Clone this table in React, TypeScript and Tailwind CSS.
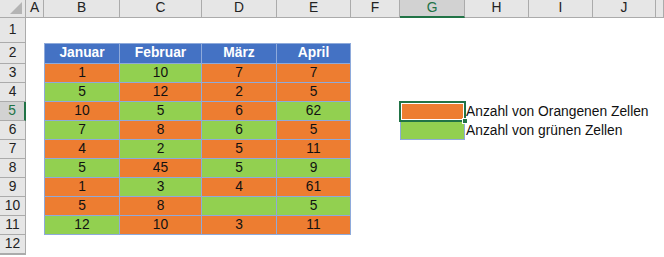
import React from "react";

type Fill = "o" | "g";
type Cell = [string, Fill];

const COLS = ["A", "B", "C", "D", "E", "F", "G", "H", "I", "J", ""];

const HEADERS = ["Januar", "Februar", "März", "April"];

// rows 3..11, columns B..E
const DATA: Cell[][] = [
  [["1", "o"], ["10", "g"], ["7", "o"], ["7", "o"]],
  [["5", "g"], ["12", "o"], ["2", "o"], ["5", "o"]],
  [["10", "o"], ["5", "g"], ["6", "o"], ["62", "g"]],
  [["7", "g"], ["8", "o"], ["6", "g"], ["5", "o"]],
  [["4", "o"], ["2", "g"], ["5", "o"], ["11", "o"]],
  [["5", "g"], ["45", "o"], ["5", "g"], ["9", "g"]],
  [["1", "o"], ["3", "g"], ["4", "o"], ["61", "o"]],
  [["5", "o"], ["8", "o"], ["", "g"], ["5", "g"]],
  [["12", "g"], ["10", "o"], ["3", "o"], ["11", "o"]],
];

const fillClass = (f: Fill) => (f === "o" ? "bg-[#ed7d31]" : "bg-[#92d050]");

function Corner() {
  return (
    <div className="relative border-r border-b border-[#ababab] bg-[#e6e6e6]">
      <svg className="absolute right-[3px] bottom-[3px]" width="12" height="12" viewBox="0 0 12 12">
        <polygon points="12,0 12,12 0,12" fill="#b4b4b4" />
      </svg>
    </div>
  );
}

function ColHeader({ label }: { label: string }) {
  const active = label === "G";
  return (
    <div
      className={
        active
          ? "flex items-center justify-center border-r border-[#ababab] border-b-2 border-b-[#217346] bg-[#d2d2d2] text-[#217346]"
          : "flex items-center justify-center border-r border-b border-[#ababab] bg-[#e6e6e6] text-[#222]"
      }
    >
      {label}
    </div>
  );
}

function RowHeader({ n }: { n: number }) {
  const active = n === 5;
  return (
    <div
      className={
        active
          ? "flex items-center justify-center border-b border-[#ababab] border-r-2 border-r-[#217346] bg-[#d2d2d2] text-[#217346]"
          : "flex items-center justify-center border-r border-b border-[#ababab] bg-[#e6e6e6] text-[#222]"
      }
    >
      {n <= 12 ? n : ""}
    </div>
  );
}

function SheetCell({ row, col }: { row: number; col: number }) {
  const tableCol = col >= 1 && col <= 4;
  const edge = `${col === 1 ? "border-l" : ""} ${row === 2 ? "border-t" : ""}`;

  if (tableCol && row === 2) {
    return (
      <div
        className={`flex items-center justify-center border-r border-b border-[#8eaadb] bg-[#4472c4] font-bold text-white ${edge}`}
      >
        {HEADERS[col - 1]}
      </div>
    );
  }

  if (tableCol && row >= 3 && row <= 11) {
    const [value, fill] = DATA[row - 3][col - 1];
    return (
      <div
        className={`flex items-center justify-center border-r border-b border-[#8eaadb] pt-px text-[#111] ${fillClass(fill)} ${edge}`}
      >
        {value}
      </div>
    );
  }

  // legend swatches in G5 / G6
  if (col === 6 && row === 5) {
    return (
      <div className="relative bg-[#ed7d31]">
        <div className="absolute -top-px -left-px -right-px -bottom-px border-2 border-[#217346]">
          <div className="h-full w-full border border-white" />
        </div>
        <div className="absolute -right-[3px] -bottom-[3px] h-[6px] w-[6px] border border-white bg-[#217346]" />
      </div>
    );
  }
  if (col === 6 && row === 6) {
    return <div className="border border-t-0 border-[#8eaadb] bg-[#92d050]" />;
  }

  // legend labels overflow from H into I and J
  if (col === 7 && (row === 5 || row === 6)) {
    return (
      <div className="relative z-10 flex items-center overflow-visible whitespace-nowrap pl-[1px] pt-px text-[#111]">
        {row === 5 ? "Anzahl von Orangenen Zellen" : "Anzahl von grünen Zellen"}
      </div>
    );
  }

  return <div />;
}

export default function App() {
  const rows = Array.from({ length: 13 }, (_, i) => i + 1);
  return (
    <div className="h-[257px] w-[664px] overflow-hidden bg-white font-['Liberation_Sans',Arial,sans-serif] text-[13.8px]">
      <div className="grid grid-cols-[26px_18px_76px_82px_75px_74px_49px_65px_64px_64px_63px_1fr] grid-rows-[18px_25px_21px_repeat(10,19px)]">
        <Corner />
        {COLS.map((c, i) => (
          <ColHeader key={i} label={c} />
        ))}
        {rows.map((r) => (
          <React.Fragment key={r}>
            <RowHeader n={r} />
            {COLS.map((_, c) => (
              <SheetCell key={c} row={r} col={c} />
            ))}
          </React.Fragment>
        ))}
      </div>
    </div>
  );
}
